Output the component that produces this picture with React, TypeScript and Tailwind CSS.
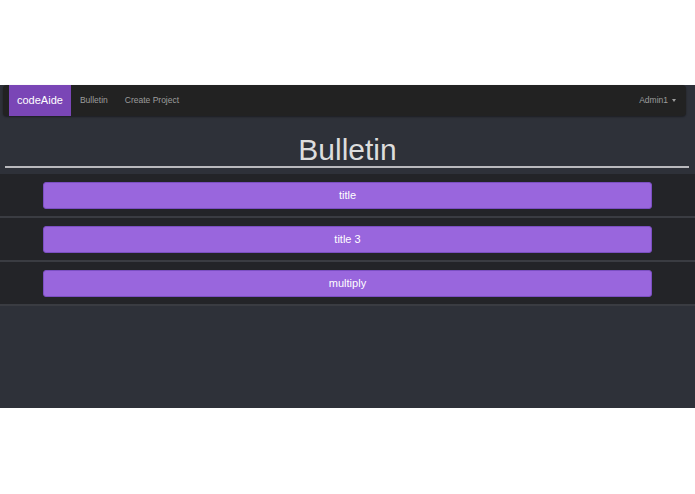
const posts = ['title', 'title 3', 'multiply'];

function NavBar() {
  return (
    <nav className="ml-[3px] mr-[9px] flex h-[31px] items-stretch rounded-[4px] bg-[#222222] pl-[6px] pr-[10px] shadow-[0_1px_2px_rgba(0,0,0,0.4)]">
      <a className="flex items-center bg-[#7a46b6] px-[8px] text-[11px] text-white">codeAide</a>
      <a className="flex items-center px-[9px] text-[8.5px] text-[#9d9d9d]">Bulletin</a>
      <a className="flex items-center px-[8px] text-[8.5px] text-[#9d9d9d]">Create Project</a>
      <div className="ml-auto flex items-center gap-[4px] text-[8.5px] text-[#9d9d9d]">
        <span>Admin1</span>
        <span className="inline-block h-0 w-0 border-x-[2.5px] border-t-[3px] border-x-transparent border-t-[#9d9d9d]" />
      </div>
    </nav>
  );
}

function PostRow({ title }: { title: string }) {
  return (
    <div className="border-b-2 border-[#3a3c42] bg-[#232428] px-[43px] pt-[8px] pb-[7px]">
      <button className="flex h-[27px] w-full items-center justify-center rounded-[3px] border border-[#7b4fc2] bg-[#9966dd] text-[11px] text-white">
        {title}
      </button>
    </div>
  );
}

export default function App() {
  return (
    <div className="h-[494px] bg-white font-['Liberation_Sans',Arial,sans-serif]">
      <div className="h-[85px]" />
      <div className="h-[323px] bg-[#2e3139]">
        <NavBar />
        <div className="flex h-[50px] items-end justify-center pb-[1px]">
          <h1 className="text-[30px] leading-none text-[#dddddd]">Bulletin</h1>
        </div>
        <div className="ml-[5px] mr-[6px] h-[2px] bg-[#b9b9bd]" />
        <div className="h-[6px]" />
        <div className="flex flex-col">
          {posts.map((p) => (
            <PostRow key={p} title={p} />
          ))}
        </div>
      </div>
    </div>
  );
}
